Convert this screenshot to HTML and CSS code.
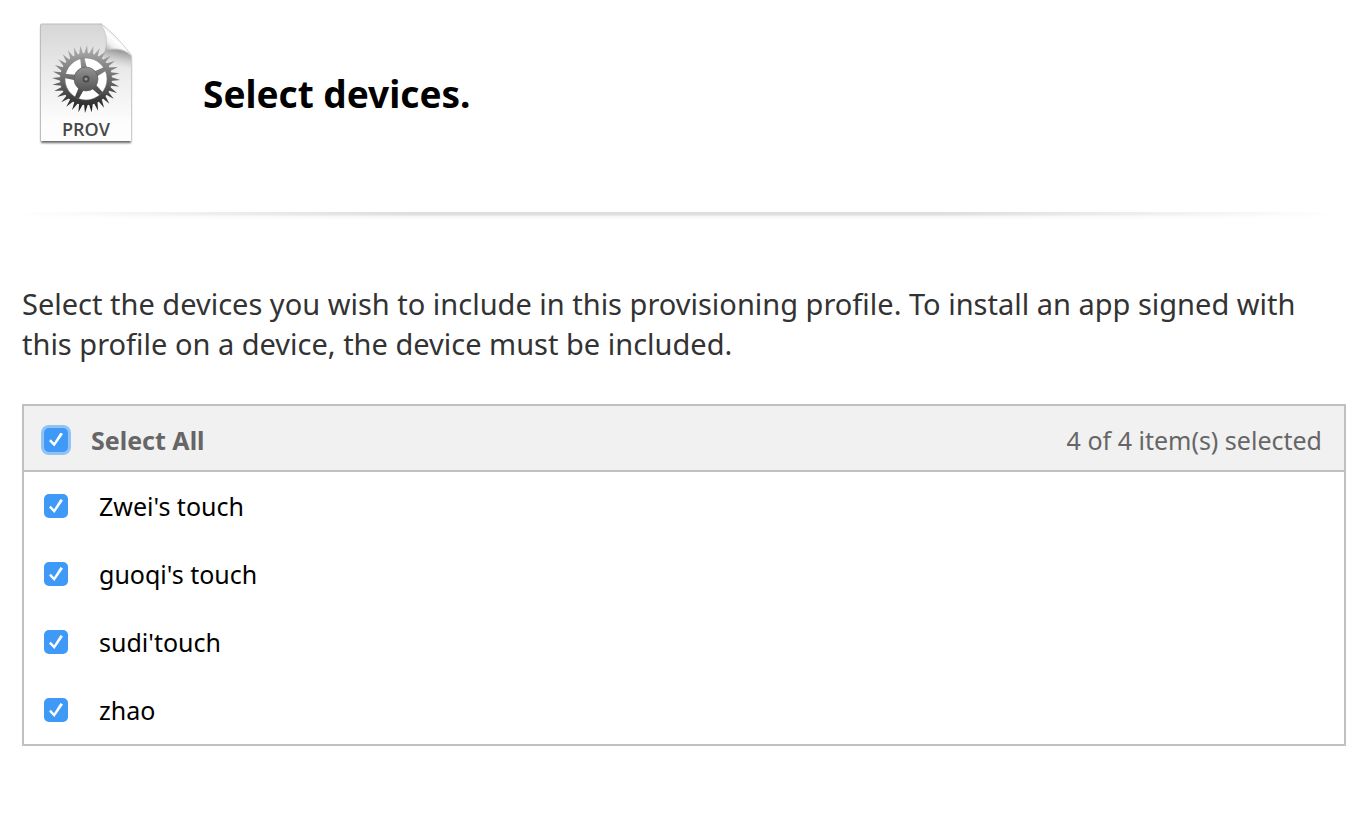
FILE: index.html
```html
<!DOCTYPE html>
<html lang="en">
<head>
<meta charset="utf-8">
<title>Select devices</title>
<link rel="stylesheet" href="styles.css">
</head>
<body>
<header class="page-header">
  <svg class="profile-icon" viewBox="0 0 100 128" role="img" aria-label="Provisioning profile">
    <defs>
      <linearGradient id="paper" x1="0" y1="0" x2="0" y2="1">
        <stop offset="0" stop-color="#d6d6d6"/>
        <stop offset=".45" stop-color="#ececec"/>
        <stop offset=".85" stop-color="#fdfdfd"/>
      </linearGradient>
      <linearGradient id="curl" gradientUnits="userSpaceOnUse" x1="72" y1="31" x2="84" y2="17">
        <stop offset="0" stop-color="#b4b4b4"/>
        <stop offset=".35" stop-color="#eeeeee"/>
        <stop offset=".7" stop-color="#ffffff"/>
        <stop offset="1" stop-color="#e2e2e2"/>
      </linearGradient>
      <linearGradient id="curl-shade" gradientUnits="userSpaceOnUse" x1="84" y1="27" x2="80" y2="46">
        <stop offset="0" stop-color="#666666" stop-opacity=".8"/>
        <stop offset="1" stop-color="#aaaaaa" stop-opacity="0"/>
      </linearGradient>
      <linearGradient id="metal" x1="0" y1="0" x2="0" y2="1">
        <stop offset="0" stop-color="#b4b4b4"/>
        <stop offset=".5" stop-color="#6c6c6c"/>
        <stop offset="1" stop-color="#181818"/>
      </linearGradient>
      <linearGradient id="hub" x1="0" y1="0" x2="0" y2="1">
        <stop offset="0" stop-color="#939393"/>
        <stop offset="1" stop-color="#555555"/>
      </linearGradient>
      <filter id="shadow" x="-10%" y="-10%" width="120%" height="120%">
        <feDropShadow dx="0" dy="2" stdDeviation="1" flood-opacity=".6"/>
      </filter>
      <path id="tooth" d="M-2-25L1-34L2-25Z"/>
      <g id="teeth">
        <use href="#tooth"/>
        <use href="#tooth" transform="rotate(11.25)"/>
        <use href="#tooth" transform="rotate(22.5)"/>
        <use href="#tooth" transform="rotate(33.75)"/>
        <use href="#tooth" transform="rotate(45)"/>
        <use href="#tooth" transform="rotate(56.25)"/>
        <use href="#tooth" transform="rotate(67.5)"/>
        <use href="#tooth" transform="rotate(78.75)"/>
      </g>
      <path id="spoke" d="M-3-8L-2-23H2L3-8Z"/>
      <mask id="gear" maskUnits="userSpaceOnUse" x="-36" y="-36" width="72" height="72">
        <g fill="#fff">
          <use href="#teeth"/>
          <use href="#teeth" transform="rotate(90)"/>
          <use href="#teeth" transform="rotate(180)"/>
          <use href="#teeth" transform="rotate(270)"/>
          <circle r="23.5" fill="none" stroke="#fff" stroke-width="5"/>
          <use href="#spoke" transform="rotate(-10)"/>
          <use href="#spoke" transform="rotate(62)"/>
          <use href="#spoke" transform="rotate(134)"/>
          <use href="#spoke" transform="rotate(206)"/>
          <use href="#spoke" transform="rotate(278)"/>
        </g>
      </mask>
    </defs>
    <path d="M5 4H66L95 34V121H5Z" fill="url(#paper)" filter="url(#shadow)"/>
    <path d="M4.500 121V5Q4.500 4 5.500 4H66" fill="none" stroke="#bdbdbd"/>
    <path d="M69 30Q87 27 95 36V48L66 44Z" fill="url(#curl-shade)"/>
    <path d="M64 4C70 11 72 20 69 31C80 27 90 29 95 36C92 29 71 6 64 4Z" fill="url(#curl)" stroke="#b5b5b5" stroke-width=".6"/>
    <g transform="translate(50 59)">
      <circle r="22" fill="#fff"/>
      <g mask="url(#gear)"><circle r="35" fill="url(#metal)"/></g>
      <circle r="21" fill="none" stroke="#777" stroke-width=".7" opacity=".7"/>
      <circle r="12" fill="url(#hub)" stroke="#555" stroke-width=".6"/>
      <circle r="3.5" fill="#4b4b4b"/>
      <circle r="1.6" fill="#999"/>
    </g>
    <text class="profile-icon-label" x="50" y="116" text-anchor="middle">PROV</text>
  </svg>
  <h1 class="page-title">Select devices.</h1>
</header>
<div class="divider"></div>
<main class="content">
  <p class="intro">Select the devices you wish to include in this provisioning profile. To install an app signed with this profile on a device, the device must be included.</p>
  <form class="device-list">
    <div class="list-header">
      <label class="select-all"><input class="check check-focus" type="checkbox" checked>Select All</label>
      <span class="count">4 of 4 item(s) selected</span>
    </div>
    <label class="device"><input class="check" type="checkbox" checked>Zwei's touch</label>
    <label class="device"><input class="check" type="checkbox" checked>guoqi's touch</label>
    <label class="device"><input class="check" type="checkbox" checked>sudi'touch</label>
    <label class="device"><input class="check" type="checkbox" checked>zhao</label>
  </form>
</main>
</body>
</html>
```
FILE: styles.css
```css
* { box-sizing: border-box; }

body {
  margin: 0;
  background: #fff;
  color: #000;
  font-family: "Lucida Grande", "Noto Sans", "Open Sans", sans-serif;
}

.page-header {
  display: flex;
  align-items: center;
  gap: 67px;
  padding: 20px 36px 64px;
}

.profile-icon {
  width: 100px;
  height: 128px;
  flex: none;
}

.profile-icon-label {
  font: 600 18px "Open Sans", sans-serif;
  fill: #484848;
}

.page-title {
  margin: 0;
  padding-top: 20px;
  font-size: 37px;
  line-height: 48px;
  font-weight: 700;
}

.divider {
  height: 8px;
  margin: 0 34px 0 16px;
  background:
    linear-gradient(to right, #fff, transparent 30%, transparent 70%, #fff),
    linear-gradient(to bottom, #dcdcdc 0, #e0e0e0 3px, #f4f4f4 4px, #fff 8px);
}

.content { padding: 64px 26px 48px 22px; }

.intro {
  margin: 0 0 40px;
  padding-right: 40px;
  color: #333;
  font-size: 29px;
  line-height: 40px;
}

.device-list {
  border: 2px solid #c0c0c0;
  font-size: 25px;
  line-height: 32px;
}

.list-header {
  display: flex;
  align-items: center;
  justify-content: space-between;
  height: 66px;
  padding: 3px 22px 0 20px;
  border-bottom: 2px solid #c0c0c0;
  background: #f1f1f1;
  color: #666;
}

.select-all {
  display: flex;
  align-items: center;
  gap: 23px;
  font-weight: 700;
}

.device {
  display: flex;
  align-items: center;
  gap: 31px;
  height: 68px;
  padding: 0 20px;
}

.check {
  appearance: none;
  display: grid;
  place-items: center;
  flex: none;
  width: 24px;
  height: 24px;
  margin: 0;
  border-radius: 5px;
  background: #3f99f7;
}

.check:checked::before {
  content: "";
  width: 14px;
  height: 14px;
  background: #fff;
  clip-path: polygon(0 60%, 13% 48%, 36% 73%, 82% 0, 100% 10%, 38% 100%);
}

.check-focus { box-shadow: 0 0 0 3px #91c2f4; }
```
